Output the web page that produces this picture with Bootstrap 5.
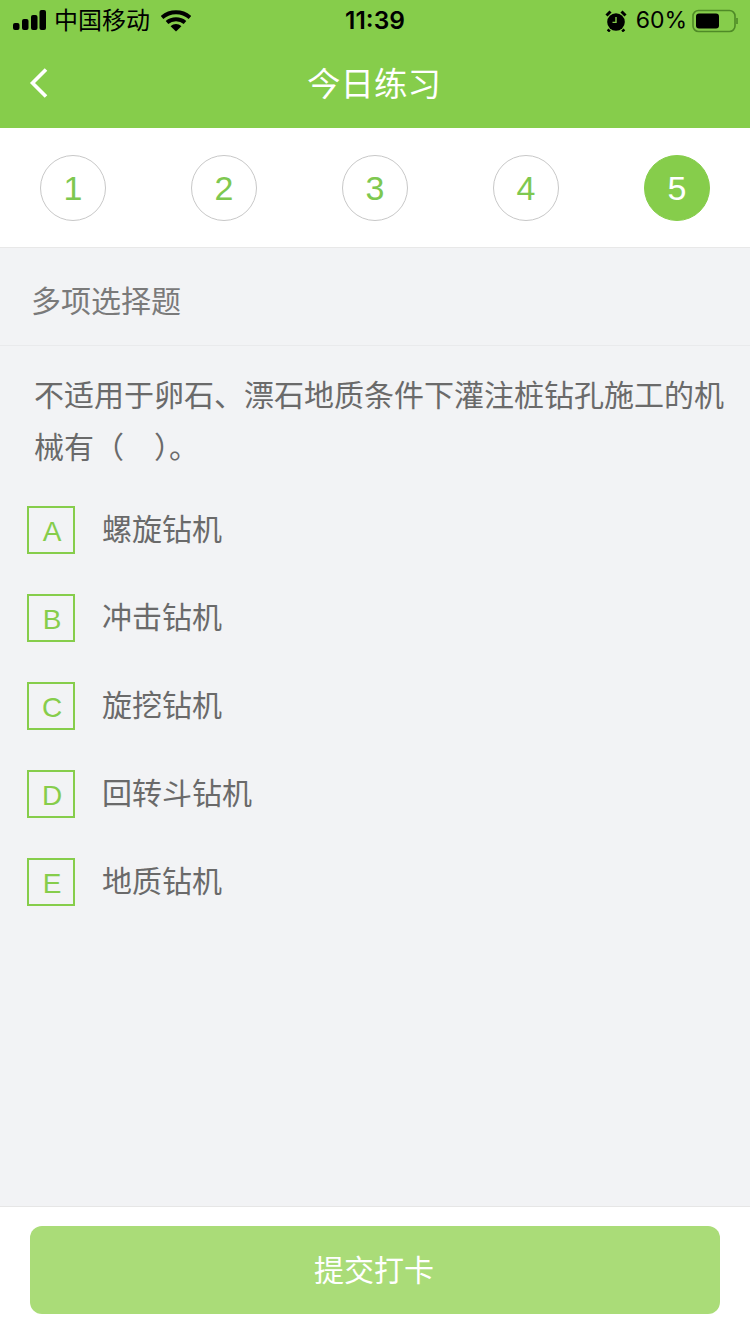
<!DOCTYPE html>
<html lang="zh-CN">
<head>
  <meta charset="UTF-8">
  <meta name="viewport" content="width=device-width, initial-scale=1.0">
  <title>今日练习</title>
  <link rel="stylesheet" href="https://cdn.jsdelivr.net/npm/bootstrap@5.3.0/dist/css/bootstrap.min.css">
  <style>
    html, body { height: 100%; }
    body {
      font-family: "Liberation Sans", "Noto Sans CJK SC", sans-serif;
      background: #f2f3f5;
      color: #666;
      overflow: hidden;
    }
    .app-screen { height: 1334px; }
    .app-top { background: #86cd4b; height: 128px; }
    .status-row { height: 40px; padding: 1px 12px 0 13px; color: #000; font-size: 24px; }
    .status-time { font-size: 24.5px; font-weight: 600; font-family: Inter, "Liberation Sans", sans-serif; margin-top: 0; }
    .status-carrier { margin-left: 7px; margin-right: 11px; }
    .status-pct { margin: 0 5px 0 9px; font-family: Inter, "Liberation Sans", sans-serif; font-size: 23px; }
    .nav-row { height: 88px; color: #fff; font-size: 33.5px; padding-top: 3px; }
    .nav-row span { margin-left: -2px; }
    .nav-back { position: absolute; left: 29px; top: 27px; }
    .step-strip { height: 120px; background: #fff; border-bottom: 1px solid #e8e8e8; padding: 27px 40px 0; }
    .step-dot {
      width: 66px; height: 66px; border: 1px solid #c8c8c8; border-radius: 50%;
      color: #7ec850; font-size: 34px; line-height: 1;
    }
    .step-dot.is-on { background: #86cd4b; border-color: #86cd4b; color: #fff; }
    .type-title { height: 98px; padding: 10px 32px 0 31px; font-size: 30px; color: #7a7a7a; border-bottom: 1px solid #e9eaec; }
    .question-text { margin: 0; padding: 24px 20px 0 34px; font-size: 30px; line-height: 52px; color: #6a6a6a; }
    .option-list { padding: 32px 0 0 27px; gap: 40px; }
    .option-key {
      width: 48px; height: 48px; border: 2px solid #86cd4b; color: #86cd4b;
      font-size: 28px; line-height: 1; margin-right: 27px; padding: 3px 0 0 2px;
    }
    .option-label { font-size: 30px; color: #6a6a6a; margin-top: -1px; }
    .app-foot { height: 128px; background: #fff; border-top: 1px solid #e6e6e6; padding: 19px 30px 0; }
    .submit-btn {
      height: 88px; background: #aadc78; border: 0; border-radius: 12px;
      color: #fff; font-size: 30px; padding-right: 14px;
    }
    .submit-btn:disabled { background: #aadc78; color: #fff; opacity: 1; }
  </style>
</head>
<body>
<div class="app-screen d-flex flex-column">
  <header class="app-top flex-shrink-0">
    <div class="status-row position-relative d-flex align-items-center">
      <svg width="34" height="21" viewBox="0 0 34 21">
        <rect x="0" y="13" width="6.5" height="7" rx="2" fill="#000"/>
        <rect x="9" y="9" width="6.5" height="11" rx="2" fill="#000"/>
        <rect x="18" y="5" width="6.5" height="15" rx="2" fill="#000"/>
        <rect x="26.5" y="0" width="6.5" height="20" rx="2" fill="#000"/>
      </svg>
      <span class="status-carrier">中国移动</span>
      <svg width="30" height="22" viewBox="0 0 30 22">
        <path d="M1 7.5C9 .5 21 .5 29 7.5" fill="none" stroke="#000" stroke-width="4"/>
        <path d="M6 12.5C11 8.3 19 8.3 24 12.5" fill="none" stroke="#000" stroke-width="4"/>
        <path d="M9.6 16.2C12.8 13.4 17.2 13.4 20.4 16.2L15 21.6Z" fill="#000"/>
      </svg>
      <span class="status-time position-absolute top-50 start-50 translate-middle">11:39</span>
      <span class="ms-auto d-flex align-items-center">
        <svg width="22" height="22" viewBox="0 0 22 22">
          <circle cx="11" cy="12" r="8.8" fill="#000"/>
          <path d="M11 7v5.4H7.5" fill="none" stroke="#86cd4b" stroke-width="1.4"/>
          <path d="M1.5 5.5 5.5 1.5M20.5 5.5 16.5 1.5M4.5 19.5 3 21.5M17.5 19.5 19 21.5" stroke="#000" stroke-width="3"/>
        </svg>
        <span class="status-pct">60%</span>
        <svg width="46" height="24" viewBox="0 0 46 24">
          <rect x="1" y="1.5" width="42" height="21" rx="5.5" fill="none" stroke="#4f8a27" stroke-width="1.6"/>
          <rect x="4" y="4.5" width="23" height="15" rx="3" fill="#000"/>
          <path d="M45 9v6" stroke="#4f8a27" stroke-width="1.6"/>
        </svg>
      </span>
    </div>
    <div class="nav-row position-relative d-flex align-items-center justify-content-center">
      <svg class="nav-back" width="20" height="32" viewBox="0 0 20 32">
        <path d="M17 2.5 3.5 16 17 29.5" fill="none" stroke="#fff" stroke-width="3.6"/>
      </svg>
      <span>今日练习</span>
    </div>
  </header>

  <div class="step-strip flex-shrink-0 d-flex justify-content-between align-items-start">
    <div class="step-dot d-flex align-items-center justify-content-center">1</div>
    <div class="step-dot d-flex align-items-center justify-content-center">2</div>
    <div class="step-dot d-flex align-items-center justify-content-center">3</div>
    <div class="step-dot d-flex align-items-center justify-content-center">4</div>
    <div class="step-dot is-on d-flex align-items-center justify-content-center">5</div>
  </div>

  <main class="flex-grow-1">
    <div class="type-title d-flex align-items-center">多项选择题</div>
    <p class="question-text">不适用于卵石、漂石地质条件下灌注桩钻孔施工的机械有（　）。</p>
    <div class="option-list d-flex flex-column">
      <div class="d-flex align-items-center"><span class="option-key d-flex align-items-center justify-content-center">A</span><span class="option-label">螺旋钻机</span></div>
      <div class="d-flex align-items-center"><span class="option-key d-flex align-items-center justify-content-center">B</span><span class="option-label">冲击钻机</span></div>
      <div class="d-flex align-items-center"><span class="option-key d-flex align-items-center justify-content-center">C</span><span class="option-label">旋挖钻机</span></div>
      <div class="d-flex align-items-center"><span class="option-key d-flex align-items-center justify-content-center">D</span><span class="option-label">回转斗钻机</span></div>
      <div class="d-flex align-items-center"><span class="option-key d-flex align-items-center justify-content-center">E</span><span class="option-label">地质钻机</span></div>
    </div>
  </main>

  <footer class="app-foot flex-shrink-0">
    <button type="button" class="btn submit-btn w-100" disabled>提交打卡</button>
  </footer>
</div>
<script src="https://cdn.jsdelivr.net/npm/bootstrap@5.3.0/dist/js/bootstrap.bundle.min.js"></script>
</body>
</html>
